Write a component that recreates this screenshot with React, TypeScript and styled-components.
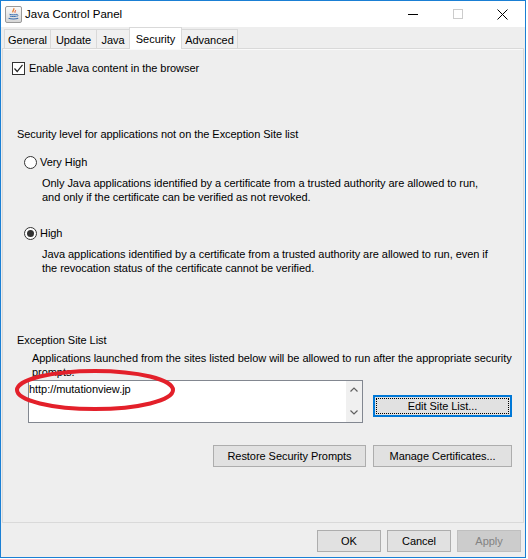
import React from "react";
import styled, { createGlobalStyle, css } from "styled-components";

const GlobalStyle = createGlobalStyle`
  html, body { margin: 0; padding: 0; background: #ffffff; }
  body {
    font-family: "Liberation Sans", Arial, sans-serif;
    font-size: 11px;
    letter-spacing: -0.05px;
    color: #000;
  }
  * { box-sizing: border-box; }
`;

const Window = styled.div`
  width: 526px;
  height: 558px;
  border: 1px solid #1a7fd4;
  background: #eeeeee;
  display: flex;
  flex-direction: column;
`;

const TitleBar = styled.div`
  height: 26px;
  flex-shrink: 0;
  background: #ffffff;
  display: flex;
  align-items: center;
`;

const TitleIcon = styled.svg`
  width: 17px;
  height: 17px;
  margin-left: 4px;
  flex-shrink: 0;
`;

const TitleText = styled.span`
  margin-left: 3px;
  font-size: 11.5px;
  letter-spacing: 0;
`;

const Controls = styled.div`
  margin-left: auto;
  height: 100%;
  display: flex;
`;

const ControlButton = styled.div`
  width: 45px;
  height: 100%;
  display: flex;
  align-items: center;
  justify-content: center;
`;

const Body = styled.div`
  padding: 0 1px;
  display: flex;
  flex-direction: column;
`;

const TabRow = styled.div`
  height: 21px;
  padding-left: 2px;
  display: flex;
  align-items: flex-end;
  position: relative;
  z-index: 1;
`;

const Tab = styled.div<{ $w: number; $active?: boolean }>`
  width: ${(p) => p.$w}px;
  height: 19px;
  border: 1px solid #d9d9d9;
  border-bottom: none;
  background: #f0f0f0;
  display: flex;
  align-items: center;
  justify-content: center;
  padding-top: 2px;
  & + & {
    margin-left: -1px;
  }
  ${(p) =>
    p.$active &&
    css`
      height: 22px;
      margin-bottom: -1px;
      background: #ffffff;
      padding-top: 0;
      position: relative;
      z-index: 2;
    `}
`;

const Panel = styled.div`
  height: 475px;
  border: 1px solid #d9d9d9;
  box-shadow: inset 0 1px 0 #fafafa;
  background: #eeeeee;
  position: relative;
  display: flex;
  flex-direction: column;
  padding-top: 11px;
`;

const CheckRow = styled.label`
  height: 16px;
  margin-left: 9px;
  display: flex;
  align-items: center;
  gap: 4px;
`;

const CheckBox = styled.span`
  width: 13px;
  height: 13px;
  border: 1px solid #333333;
  background: #ffffff;
  display: flex;
  align-items: center;
  justify-content: center;
`;

const SectionLabel = styled.div<{ $top: number }>`
  margin: ${(p) => p.$top}px 0 0 14px;
  line-height: 14px;
`;

const RadioRow = styled.label<{ $top: number }>`
  height: 16px;
  margin: ${(p) => p.$top}px 0 0 21px;
  display: flex;
  align-items: center;
  gap: 3px;
`;

const RadioCircle = styled.span<{ $checked?: boolean }>`
  width: 13px;
  height: 13px;
  border: 1px solid #333333;
  border-radius: 50%;
  background: #ffffff;
  display: flex;
  align-items: center;
  justify-content: center;
  &::after {
    content: "";
    width: 7px;
    height: 7px;
    border-radius: 50%;
    background: ${(p) => (p.$checked ? "#333333" : "transparent")};
  }
`;

const Desc = styled.div`
  margin: 6px 0 0 39px;
  line-height: 14px;
  white-space: nowrap;
`;

const Note = styled.div`
  margin: 4px 0 0 29px;
  line-height: 14px;
  white-space: nowrap;
`;

const ListRow = styled.div`
  margin: 1px 0 0 25px;
  display: flex;
  align-items: flex-start;
  gap: 10px;
`;

const ListBox = styled.div`
  width: 335px;
  height: 43px;
  border: 1px solid #828790;
  background: #ffffff;
  display: flex;
`;

const ListText = styled.div`
  flex: 1;
  line-height: 14px;
  padding-top: 1px;
`;

const ScrollBar = styled.div`
  width: 16px;
  background: #f0f0f0;
  display: flex;
  flex-direction: column;
  align-items: center;
  justify-content: space-between;
  padding: 6px 0 7px;
`;

const ButtonRow = styled.div`
  margin-top: 22px;
  padding-right: 11px;
  display: flex;
  justify-content: flex-end;
  gap: 7px;
`;

const Button = styled.button<{ $w: number; $focused?: boolean; $top?: number }>`
  width: ${(p) => p.$w}px;
  height: 22px;
  margin-top: ${(p) => p.$top ?? 0}px;
  padding: 0;
  background: #e1e1e1;
  border: 1px solid #adadad;
  font-family: "Liberation Sans", Arial, sans-serif;
  font-size: 11px;
  letter-spacing: -0.05px;
  color: #000000;
  display: flex;
  align-items: center;
  justify-content: center;
  position: relative;
  flex-shrink: 0;
  &:disabled {
    background: #cccccc;
    border-color: #bfbfbf;
    color: #838383;
  }
  ${(p) =>
    p.$focused &&
    css`
      border-color: #0078d7;
      box-shadow: inset 0 0 0 1px #0078d7;
      &::after {
        content: "";
        position: absolute;
        inset: 2px;
        border: 1px dotted #000000;
      }
    `}
`;

const Footer = styled.div`
  flex: 1;
  display: flex;
  justify-content: flex-end;
  align-items: flex-start;
  gap: 6px;
  padding: 7px 4px 0 0;
`;

const Annotation = styled.svg`
  position: absolute;
  left: 10px;
  top: 318px;
  width: 170px;
  height: 48px;
  pointer-events: none;
`;

const JavaIcon = () => (
  <TitleIcon viewBox="0 0 17 17">
    <defs>
      <linearGradient id="jg" x1="0" y1="0" x2="0" y2="1">
        <stop offset="0" stopColor="#fbfbfb" />
        <stop offset="1" stopColor="#d6d6d6" />
      </linearGradient>
    </defs>
    <rect x="0.5" y="0.5" width="16" height="16" rx="1.5" fill="url(#jg)" stroke="#9a9a9a" />
    <path d="M8.6 2.2c1.6 1.4-1.8 2.4-0.6 4.2" fill="none" stroke="#e8741c" strokeWidth="1.2" />
    <path d="M10.4 4.2c0.8 0.9-1.4 1.5-0.3 2.5" fill="none" stroke="#e0421b" strokeWidth="1" />
    <path d="M4.5 8.3c1.6 0.7 6 0.7 7.4 0" fill="none" stroke="#3b6fb0" strokeWidth="1" />
    <path d="M4.8 10.1c1.6 0.6 5.4 0.6 6.8 0" fill="none" stroke="#3b6fb0" strokeWidth="1" />
    <path d="M11.8 8.6c1.6-0.3 1.6 1.5 0 1.8" fill="none" stroke="#3b6fb0" strokeWidth="0.9" />
    <path d="M3.6 12.3c2 1 7.6 1 9.6 0" fill="none" stroke="#3b6fb0" strokeWidth="1.1" />
  </TitleIcon>
);

const tabs = [
  { label: "General", w: 47 },
  { label: "Update", w: 47 },
  { label: "Java", w: 34 },
  { label: "Security", w: 53, active: true },
  { label: "Advanced", w: 57 },
];

export default function App() {
  return (
    <>
      <GlobalStyle />
      <Window>
        <TitleBar>
          <JavaIcon />
          <TitleText>Java Control Panel</TitleText>
          <Controls>
            <ControlButton>
              <svg width="10" height="10" viewBox="0 0 10 10">
                <line x1="0" y1="5.5" x2="10" y2="5.5" stroke="#000" strokeWidth="1" />
              </svg>
            </ControlButton>
            <ControlButton>
              <svg width="10" height="10" viewBox="0 0 10 10">
                <rect x="0.5" y="0.5" width="9" height="9" fill="none" stroke="#cccccc" strokeWidth="1" />
              </svg>
            </ControlButton>
            <ControlButton>
              <svg width="11" height="11" viewBox="0 0 11 11">
                <path d="M0.5 0.5L10.5 10.5M10.5 0.5L0.5 10.5" stroke="#000" strokeWidth="1" />
              </svg>
            </ControlButton>
          </Controls>
        </TitleBar>
        <Body>
          <TabRow>
            {tabs.map((t) => (
              <Tab key={t.label} $w={t.w} $active={t.active}>
                {t.label}
              </Tab>
            ))}
          </TabRow>
          <Panel>
            <CheckRow>
              <CheckBox>
                <svg width="11" height="11" viewBox="0 0 11 11">
                  <polyline points="1.5,5.5 4.2,8.5 9.5,1.8" fill="none" stroke="#222" strokeWidth="1.2" />
                </svg>
              </CheckBox>
              Enable Java content in the browser
            </CheckRow>

            <SectionLabel $top={51}>
              Security level for applications not on the Exception Site list
            </SectionLabel>

            <RadioRow $top={13}>
              <RadioCircle />
              Very High
            </RadioRow>
            <Desc>
              Only Java applications identified by a certificate from a trusted authority are allowed to run,
              <br />
              and only if the certificate can be verified as not revoked.
            </Desc>

            <RadioRow $top={21}>
              <RadioCircle $checked />
              High
            </RadioRow>
            <Desc>
              Java applications identified by a certificate from a trusted authority are allowed to run, even if
              <br />
              the revocation status of the certificate cannot be verified.
            </Desc>

            <SectionLabel $top={58}>Exception Site List</SectionLabel>
            <Note>
              Applications launched from the sites listed below will be allowed to run after the appropriate security
              <br />
              prompts.
            </Note>
            <ListRow>
              <ListBox>
                <ListText>http://mutationview.jp</ListText>
                <ScrollBar>
                  <svg width="8" height="5" viewBox="0 0 8 5">
                    <polyline points="0.5,4.5 4,1 7.5,4.5" fill="none" stroke="#606060" strokeWidth="1.2" />
                  </svg>
                  <svg width="8" height="5" viewBox="0 0 8 5">
                    <polyline points="0.5,0.5 4,4 7.5,0.5" fill="none" stroke="#606060" strokeWidth="1.2" />
                  </svg>
                </ScrollBar>
              </ListBox>
              <Button $w={139} $top={15} $focused>
                Edit Site List...
              </Button>
            </ListRow>

            <ButtonRow>
              <Button $w={153}>Restore Security Prompts</Button>
              <Button $w={139}>Manage Certificates...</Button>
            </ButtonRow>

            <Annotation viewBox="0 0 170 48">
              <ellipse cx="82" cy="23" rx="78" ry="19" fill="none" stroke="#e3202a" strokeWidth="4" />
            </Annotation>
          </Panel>
        </Body>
        <Footer>
          <Button $w={64}>OK</Button>
          <Button $w={64}>Cancel</Button>
          <Button $w={64} disabled>
            Apply
          </Button>
        </Footer>
      </Window>
    </>
  );
}
